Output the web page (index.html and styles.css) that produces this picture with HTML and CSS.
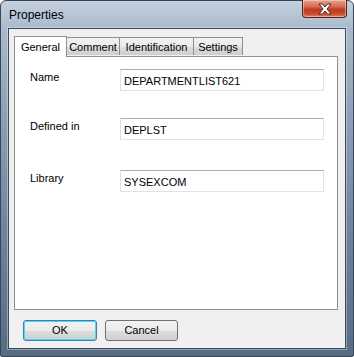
FILE: index.html
```html
<!DOCTYPE html>
<html>
<head>
<meta charset="utf-8">
<link rel="stylesheet" href="styles.css">
</head>
<body>
<div class="window">
  <div class="titlebar">
    <span class="title">Properties</span>
    <div class="close">
      <svg width="16" height="12" viewBox="0 0 16 12">
        <path d="M2 1 L5.5 1 L8 4 L10.5 1 L14 1 L10 6 L14 11 L10.5 11 L8 8 L5.5 11 L2 11 L6 6 Z" fill="#fff" stroke="#4a2a26" stroke-width="1" stroke-linejoin="round"/>
      </svg>
    </div>
  </div>
  <div class="client">
    <div class="tabs">
      <div class="tab active">General</div>
      <div class="tab t-comment">Comment</div>
      <div class="tab t-ident">Identification</div>
      <div class="tab t-settings">Settings</div>
    </div>
    <div class="panel">
      <div class="row r1">
        <span class="label">Name</span>
        <div class="field">DEPARTMENTLIST621</div>
      </div>
      <div class="row r2">
        <span class="label">Defined in</span>
        <div class="field">DEPLST</div>
      </div>
      <div class="row r3">
        <span class="label">Library</span>
        <div class="field">SYSEXCOM</div>
      </div>
    </div>
    <div class="buttons">
      <div class="btn default">OK</div>
      <div class="btn">Cancel</div>
    </div>
  </div>
</div>
</body>
</html>
```
FILE: styles.css
```css
html, body {
  margin: 0;
  padding: 0;
  background: #ffffff;
}
body {
  font-family: "Liberation Sans", Arial, sans-serif;
  font-size: 11px;
  color: #000;
}
.window {
  width: 354px;
  height: 357px;
  box-sizing: border-box;
  border: 1px solid #3a4656;
  border-radius: 6px 6px 2px 2px;
  background: linear-gradient(to bottom, #c4d1de 0px, #a9bacc 28px, #8ea1b6 110px, #6f849c 230px, #566b84 357px);
  display: flex;
  flex-direction: column;
}
.titlebar {
  height: 27px;
  display: flex;
  justify-content: space-between;
  align-items: flex-start;
  padding-left: 8px;
  padding-right: 6px;
}
.title {
  font-size: 12px;
  margin-top: 7px;
  color: #000;
}
.close {
  width: 45px;
  height: 18px;
  margin-top: -1px;
  box-sizing: border-box;
  border: 1px solid #4c2722;
  border-top: none;
  border-radius: 0 0 4px 4px;
  background: linear-gradient(to bottom, #e8a493 0%, #d46a52 40%, #c2391f 55%, #c8492c 80%, #e07d5f 100%);
  box-shadow: inset 0 0 0 1px rgba(255,220,200,0.5);
  display: flex;
  align-items: center;
  justify-content: center;
}
.client {
  margin: 0 7px 7px 7px;
  flex: 1;
  background: #f0f0f0;
  border: 1px solid #3d4a5a;
  box-shadow: 0 0 0 1px rgba(255,255,255,0.35);
  padding: 6px 7px 0 5px;
  display: flex;
  flex-direction: column;
}
.tabs {
  display: flex;
  align-items: flex-end;
  height: 21px;
  position: relative;
  z-index: 1;
}
.tab {
  height: 18px;
  box-sizing: border-box;
  border: 1px solid #8e8f8f;
  border-bottom: none;
  border-left: none;
  background: linear-gradient(to bottom, #f2f2f2 0%, #ebebeb 50%, #dddddd 51%, #cfcfcf 100%);
  padding: 2px 0 0 0;
  text-align: center;
  line-height: 14px;
  margin-bottom: 1px;
}
.t-comment { width: 53px; }
.t-ident { width: 74px; }
.t-settings { width: 49px; }
.tab.active {
  height: 21px;
  border-left: 1px solid #8e8f8f;
  border-right: 1px solid #8e8f8f;
  background: #ffffff;
  padding: 3px 0 0 0;
  margin-bottom: 0;
  width: 53px;
  position: relative;
  top: 1px;
}
.panel {
  height: 254px;
  box-sizing: border-box;
  border: 1px solid #8e8f8f;
  background: #ffffff;
  padding: 12px 13px 0 15px;
}
.row {
  display: flex;
  align-items: flex-start;
}
.r2 { margin-top: 27px; }
.r3 { margin-top: 30px; }
.label {
  width: 90px;
  margin-top: 2px;
  line-height: 13px;
}
.field {
  width: 204px;
  height: 22px;
  box-sizing: border-box;
  border: 1px solid #e2e3ea;
  border-top-color: #abadb3;
  border-left-color: #dbdfe6;
  padding: 3px 3px 0 3px;
  font-size: 11px;
  line-height: 16px;
  color: #000;
}
.buttons {
  display: flex;
  gap: 8px;
  padding-left: 9px;
  margin-top: 10px;
}
.btn {
  width: 73px;
  height: 21px;
  box-sizing: border-box;
  border: 1px solid #707070;
  border-radius: 3px;
  background: linear-gradient(to bottom, #f2f2f2 0%, #ebebeb 50%, #dddddd 51%, #cfcfcf 100%);
  text-align: center;
  font-size: 11px;
  line-height: 19px;
}
.btn.default {
  width: 74px;
  border-color: #3c7fb1;
  box-shadow: inset 0 0 0 1px #48d9f9;
}
```
